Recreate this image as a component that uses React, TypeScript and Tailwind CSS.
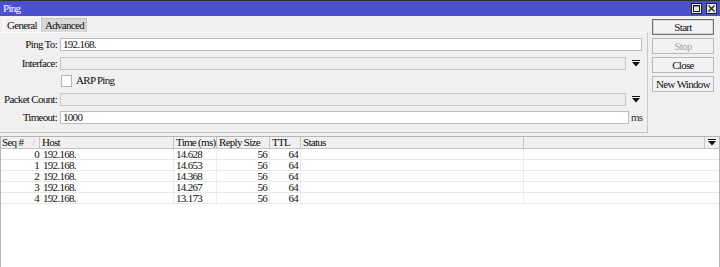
import React from "react";

type Ping = { seq: number; host: string; time: string; size: number; ttl: number };

const rows: Ping[] = [
  { seq: 0, host: "192.168.", time: "14.628", size: 56, ttl: 64 },
  { seq: 1, host: "192.168.", time: "14.653", size: 56, ttl: 64 },
  { seq: 2, host: "192.168.", time: "14.368", size: 56, ttl: 64 },
  { seq: 3, host: "192.168.", time: "14.267", size: 56, ttl: 64 },
  { seq: 4, host: "192.168.", time: "13.173", size: 56, ttl: 64 },
];

function DropArrow() {
  return (
    <svg width="8" height="7" viewBox="0 0 8 7" className="block">
      <rect x="0" y="0" width="8" height="1" fill="#111" />
      <polygon points="0,2 8,2 4,6.5" fill="#111" />
    </svg>
  );
}

function TitleBar() {
  return (
    <div className="h-[16px] border-t border-[#2e2e36] bg-[#4b50cc] flex items-center justify-between pl-[3px] pr-[3px] shrink-0">
      <span className="text-white">Ping</span>
      <div className="flex gap-[4px]">
        <span className="w-[11px] h-[11px] border border-[#222] bg-[#e6e6e6] flex items-center justify-center">
          <svg width="7" height="7" viewBox="0 0 7 7">
            <rect x="0.5" y="0.5" width="6" height="6" fill="none" stroke="#222" />
            <rect x="0" y="0" width="7" height="1.5" fill="#222" />
          </svg>
        </span>
        <span className="w-[11px] h-[11px] border border-[#222] bg-[#e6e6e6] flex items-center justify-center">
          <svg width="7" height="7" viewBox="0 0 7 7">
            <path d="M0.5 0.5 L6.5 6.5 M6.5 0.5 L0.5 6.5" stroke="#222" strokeWidth="1.3" />
          </svg>
        </span>
      </div>
    </div>
  );
}

function FieldRow({ label, children }: { label: string; children: React.ReactNode }) {
  return (
    <div className="flex items-center h-[13px]">
      <span className="w-[57px] text-right shrink-0">{label}</span>
      <div className="ml-[3px] flex items-center">{children}</div>
    </div>
  );
}

function Button({ label, primary, disabled }: { label: string; primary?: boolean; disabled?: boolean }) {
  return (
    <div
      className={
        primary
          ? "h-[16px] border border-[#6e6e6e] shadow-[inset_0_0_0_1px_#d8d8d8] bg-[#f2f2f2] flex items-center justify-center"
          : "h-[16px] border border-[#b9b9b9] bg-[#f2f2f2] flex items-center justify-center"
      }
    >
      <span className={disabled ? "text-[#a6a6a6]" : "text-[#111]"}>{label}</span>
    </div>
  );
}

export default function App() {
  return (
    <div className="w-[720px] h-[267px] bg-[#f0f0f0] flex flex-col overflow-hidden font-[Liberation_Serif,serif] text-[11px] tracking-[-0.7px] leading-none text-[#111]">
      <TitleBar />

      <div className="flex h-[117px] shrink-0">
        <div className="w-[648px] flex flex-col">
          <div className="flex items-end h-[16px] pl-[3px] pt-[1px]">
            <div className="h-[15px] w-[38px] border-t border-l border-r border-[#fcfcfc] bg-[#f0f0f0] flex items-center pl-[3px] relative z-10 shadow-[1px_0_0_#c4c4c4]">
              General
            </div>
            <div className="h-[14px] w-[45px] ml-[1px] border-t border-r border-[#c4c4c4] bg-[#d9d9d9] flex items-center pl-[3px]">
              Advanced
            </div>
          </div>

          <div className="flex-1 border-t border-[#f9f9f9] border-r border-b border-r-[#c8c8c8] border-b-[#c4c4c4] pt-[5px] flex flex-col">
            <FieldRow label="Ping To:">
              <div className="w-[582px] h-[13px] border border-[#bdbdbd] bg-white flex items-center pl-[2px]">192.168.</div>
            </FieldRow>

            <div className="mt-[6px]">
              <FieldRow label="Interface:">
                <div className="w-[566px] h-[13px] border border-[#c8c8c8] bg-[#eeeeee]" />
                <span className="ml-[6px]">
                  <DropArrow />
                </span>
              </FieldRow>
            </div>

            <div className="mt-[4px] flex items-center h-[13px] pl-[61px]">
              <span className="w-[11px] h-[12px] border border-[#b5b5b5] bg-white" />
              <span className="ml-[4px]">ARP Ping</span>
            </div>

            <div className="mt-[6px]">
              <FieldRow label="Packet Count:">
                <div className="w-[566px] h-[13px] border border-[#c8c8c8] bg-[#eeeeee]" />
                <span className="ml-[6px]">
                  <DropArrow />
                </span>
              </FieldRow>
            </div>

            <div className="mt-[5px]">
              <FieldRow label="Timeout:">
                <div className="w-[569px] h-[13px] border border-[#bdbdbd] bg-white flex items-center pl-[2px]">1000</div>
                <span className="ml-[2px] text-[#333]">ms</span>
              </FieldRow>
            </div>
          </div>
        </div>

        <div className="w-[62px] ml-[4px] pt-[3px] flex flex-col gap-[3px]">
          <Button label="Start" primary />
          <Button label="Stop" disabled />
          <Button label="Close" />
          <Button label="New Window" />
        </div>
      </div>

      <div className="mt-[3px] flex-1 flex flex-col border-t border-l border-r border-[#b4b4b4] bg-white">
        <div className="h-[12px] flex bg-[#f0f0f0] border-b border-[#c4c4c4] shrink-0">
          <div className="w-[39px] border-r border-[#c4c4c4] flex items-center pl-[1px]">
            Seq #<span className="ml-[9px] text-[#b5b5b5]">/</span>
          </div>
          <div className="w-[134px] border-r border-[#c4c4c4] flex items-center pl-[2px]">Host</div>
          <div className="w-[43px] border-r border-[#c4c4c4] flex items-center pl-[2px]">Time (ms)</div>
          <div className="w-[53px] border-r border-[#c4c4c4] flex items-center pl-[2px]">Reply Size</div>
          <div className="w-[31px] border-r border-[#c4c4c4] flex items-center pl-[2px]">TTL</div>
          <div className="w-[223px] border-r border-[#c4c4c4] flex items-center pl-[2px]">Status</div>
          <div className="flex-1 flex justify-end">
            <div className="w-[15px] border-l border-[#c4c4c4] flex items-center justify-center">
              <DropArrow />
            </div>
          </div>
        </div>

        {rows.map((r) => (
          <div key={r.seq} className="h-[11px] flex border-b border-[#e9e9e9] shrink-0">
            <div className="w-[39px] text-right pr-[1px] flex items-center justify-end">{r.seq}</div>
            <div className="w-[134px] border-r border-[#ececec] flex items-center pl-[3px]">{r.host}</div>
            <div className="w-[43px] border-r border-[#ececec] flex items-center pl-[2px]">{r.time}</div>
            <div className="w-[53px] border-r border-[#ececec] flex items-center justify-end pr-[2px]">{r.size}</div>
            <div className="w-[31px] border-r border-[#ececec] flex items-center justify-end pr-[2px]">{r.ttl}</div>
            <div className="w-[223px] border-r border-[#ececec]" />
            <div className="flex-1" />
          </div>
        ))}
      </div>
    </div>
  );
}
